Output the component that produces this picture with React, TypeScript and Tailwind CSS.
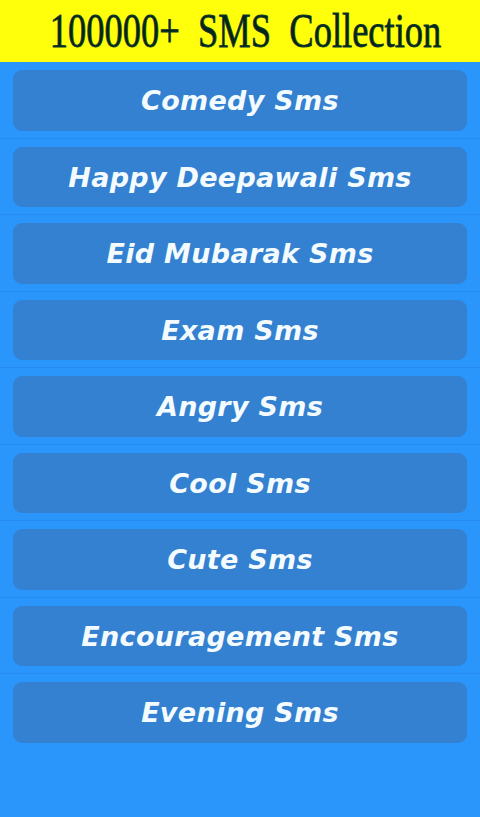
import React from "react";

const items = [
  "Comedy Sms",
  "Happy Deepawali Sms",
  "Eid Mubarak Sms",
  "Exam Sms",
  "Angry Sms",
  "Cool Sms",
  "Cute Sms",
  "Encouragement Sms",
  "Evening Sms",
];

export default function App() {
  return (
    <div className="w-[480px] h-[817px] bg-[#2a96fc] overflow-hidden">
      <div className="h-[62px] bg-[#ffff0c] flex items-center justify-center overflow-hidden pl-[12px]">
        <div
          className="text-[48px] leading-none text-[#06241a] whitespace-pre scale-x-[0.76] mt-[-1px] [-webkit-text-stroke:0.8px_#0d3a2c]"
          style={{ fontFamily: '"Liberation Serif", "Times New Roman", serif' }}
        >
          {"100000+  SMS  Collection"}
        </div>
      </div>
      <div className="flex flex-col">
        {items.map((t, i) => (
          <div
            key={t}
            className={
              i < items.length - 1
                ? "pt-[8px] pb-[7px] border-b border-[#278cee]"
                : "pt-[8px] pb-[7px]"
            }
          >
            <div className="mx-[13px] h-[60.5px] rounded-[9px] bg-[#3381d0] flex items-center justify-center pt-[2px]">
              <span
                className="text-[#f4fbff] text-[27px] font-bold italic tracking-[0.3px]"
                style={{ fontFamily: '"DejaVu Sans", Verdana, sans-serif' }}
              >
                {t}
              </span>
            </div>
          </div>
        ))}
      </div>
    </div>
  );
}
